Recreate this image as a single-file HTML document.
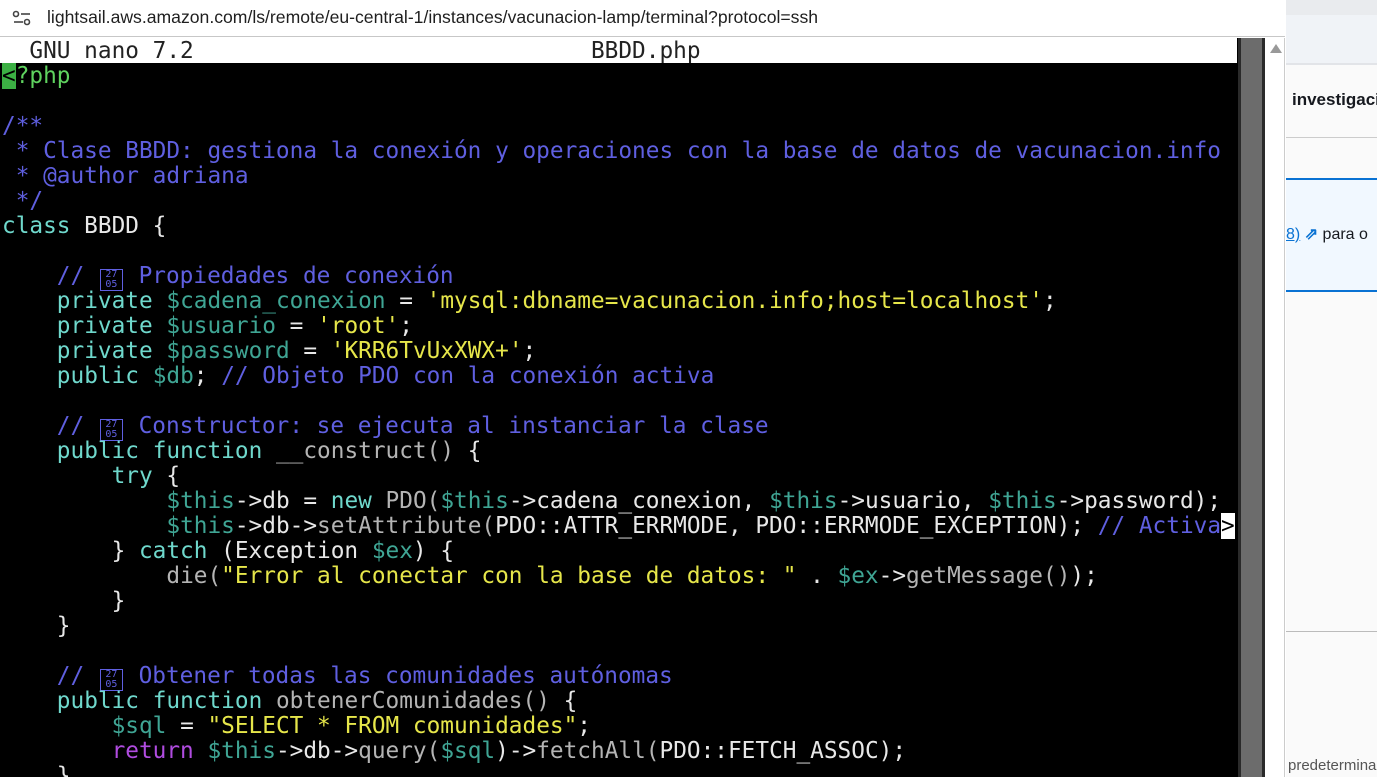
<!DOCTYPE html>
<html><head><meta charset="utf-8"><style>
*{margin:0;padding:0;box-sizing:border-box}
body{width:1377px;height:777px;overflow:hidden;background:#fff;position:relative;font-family:"Liberation Sans",sans-serif}
.addr{position:absolute;left:0;top:0;width:1285px;height:37px;background:#fff;border-bottom:1px solid #c7c7c7}
.addr .t{position:absolute;left:47px;top:7px;font-size:17.6px;color:#1f1f1f;font-family:"Liberation Sans",sans-serif;white-space:nowrap}
.term{position:absolute;left:0;top:38px;width:1238px;height:739px;background:#000;overflow:hidden;font-family:"DejaVu Sans Mono","Liberation Mono",monospace;font-size:22.75px;color:#e8e8e8}
.hdr{height:25px;background:#fff;color:#222;line-height:26px;padding-left:2px;width:1237px;white-space:pre}
.ln{height:25px;line-height:27px;padding-left:2px;white-space:pre}
.c{color:#5f5fe0}.k{color:#6fd8cc}.v{color:#3fa594}.s{color:#e6e64a}.g{color:#b4b4b4}.m{color:#b04ce0}
.bx{display:inline-block;width:23px;margin:0 2px;height:22px;border:1px solid #5f5fe0;vertical-align:-4px;font-size:10px;line-height:10px;text-align:center;color:#5f5fe0;white-space:normal}
.sb{position:absolute;left:1238px;top:38px;width:27px;height:739px;background:#6c6c6c;border-left:3px solid #2a2a2a;border-right:3px solid #2a2a2a}
.gut{position:absolute;left:1265px;top:38px;width:20px;height:739px;background:#fff;border-right:1px solid #ccc}
.tri{position:absolute;left:1270px;top:44px;width:0;height:0;border-left:6px solid transparent;border-right:6px solid transparent;border-bottom:9px solid #999}
.rp{position:absolute;left:1286px;top:0;width:91px;height:777px;background:#fafafa;font-family:"Liberation Sans",sans-serif}
</style></head><body>
<div class="addr"><svg style="position:absolute;left:12px;top:9px" width="20" height="18"><circle cx="4" cy="5" r="2.5" fill="none" stroke="#444" stroke-width="1.6"/><line x1="9" y1="5" x2="18" y2="5" stroke="#444" stroke-width="1.6"/><line x1="2" y1="13" x2="11" y2="13" stroke="#444" stroke-width="1.6"/><circle cx="15" cy="13" r="2.5" fill="none" stroke="#444" stroke-width="1.6"/></svg><span class="t">lightsail.aws.amazon.com/ls/remote/eu-central-1/instances/vacunacion-lamp/terminal?protocol=ssh</span></div>
<div class="term"><div class="hdr">  GNU nano 7.2                             BBDD.php</div><div class="ln"><span style="background:#3cb044;color:#000">&lt;</span><span style="color:#5fd35f">?php</span></div><div class="ln"></div><div class="ln c">/**</div><div class="ln c"> * Clase BBDD: gestiona la conexión y operaciones con la base de datos de vacunacion.info</div><div class="ln c"> * @author adriana</div><div class="ln c"> */</div><div class="ln"><span class="k">class</span> BBDD {</div><div class="ln"></div><div class="ln">    <span class="c">// <span class="bx">27<br>05</span> Propiedades de conexión</span></div><div class="ln">    <span class="k">private</span> <span class="v">$cadena_conexion</span> = <span class="s">'mysql:dbname=vacunacion.info;host=localhost'</span>;</div><div class="ln">    <span class="k">private</span> <span class="v">$usuario</span> = <span class="s">'root'</span>;</div><div class="ln">    <span class="k">private</span> <span class="v">$password</span> = <span class="s">'KRR6TvUxXWX+'</span>;</div><div class="ln">    <span class="k">public</span> <span class="v">$db</span>; <span class="c">// Objeto PDO con la conexión activa</span></div><div class="ln"></div><div class="ln">    <span class="c">// <span class="bx">27<br>05</span> Constructor: se ejecuta al instanciar la clase</span></div><div class="ln">    <span class="k">public</span> <span class="k">function</span> <span class="g">__construct()</span> {</div><div class="ln">        <span class="k">try</span> {</div><div class="ln">            <span class="v">$this</span>-&gt;db = <span class="k">new</span> <span class="g">PDO(</span><span class="v">$this</span>-&gt;cadena_conexion, <span class="v">$this</span>-&gt;usuario, <span class="v">$this</span>-&gt;password);</div><div class="ln">            <span class="v">$this</span>-&gt;db-&gt;<span class="g">setAttribute(</span>PDO::ATTR_ERRMODE, PDO::ERRMODE_EXCEPTION); <span class="c">// Activa</span><span style="background:#fff;color:#000">&gt;</span></div><div class="ln">        } <span class="k">catch</span> (Exception <span class="v">$ex</span>) {</div><div class="ln">            <span class="g">die(</span><span class="s">"Error al conectar con la base de datos: "</span> . <span class="v">$ex</span>-&gt;<span class="g">getMessage()</span>);</div><div class="ln">        }</div><div class="ln">    }</div><div class="ln"></div><div class="ln">    <span class="c">// <span class="bx">27<br>05</span> Obtener todas las comunidades autónomas</span></div><div class="ln">    <span class="k">public</span> <span class="k">function</span> <span class="g">obtenerComunidades()</span> {</div><div class="ln">        <span class="v">$sql</span> = <span class="s">"SELECT * FROM comunidades"</span>;</div><div class="ln">        <span class="m">return</span> <span class="v">$this</span>-&gt;db-&gt;<span class="g">query(</span><span class="v">$sql</span>)-&gt;<span class="g">fetchAll(</span>PDO::FETCH_ASSOC);</div><div class="ln">    }</div></div>
<div class="sb"></div>
<div class="gut"></div><div class="tri"></div>
<div class="rp">
 <div style="position:absolute;left:0;top:0;width:91px;height:15px;background:#e9ebee"></div>
 <div style="position:absolute;left:0;top:15px;width:91px;height:50px;background:#f0f3f7;border-bottom:2px solid #e2e4e8"></div>
 <div style="position:absolute;left:6px;top:90px;font-size:17px;font-weight:bold;color:#16191f;white-space:nowrap">investigaci</div>
 <div style="position:absolute;left:0;top:137px;width:91px;height:1px;background:#ccc"></div>
 <div style="position:absolute;left:0;top:178px;width:91px;height:114px;background:#f1f8ff;border-top:2px solid #0972d3;border-bottom:2px solid #0972d3"></div>
 <div style="position:absolute;left:0;top:224px;font-size:16px;color:#16191f;white-space:nowrap"><span style="color:#0972d3;text-decoration:underline">8)</span> <span style="color:#0972d3;font-weight:bold">⇗</span> para o</div>
 <div style="position:absolute;left:0;top:631px;width:91px;height:1px;background:#bbb"></div>
 <div style="position:absolute;left:2px;top:757px;font-size:15px;color:#555;white-space:nowrap">predetermina</div>
</div>
</body></html>
